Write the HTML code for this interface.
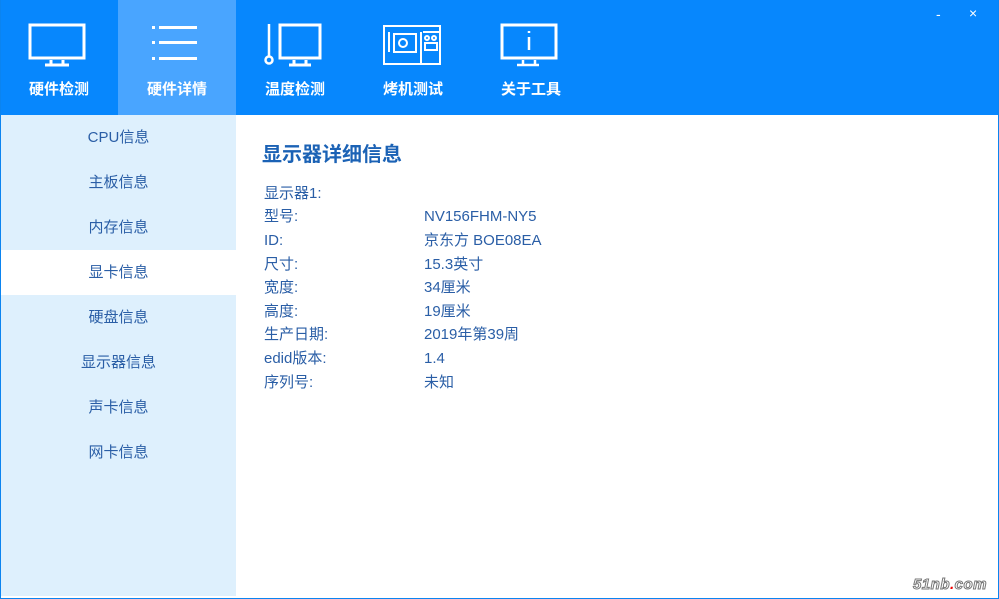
<!DOCTYPE html>
<html><head><meta charset="utf-8"><style>
*{margin:0;padding:0;box-sizing:border-box}
body{width:999px;height:599px;overflow:hidden;background:#fff;font-family:"Liberation Sans","Noto Sans CJK SC",sans-serif;position:relative}
.hdr{position:absolute;left:0;top:0;width:999px;height:115px;background:#0787fd}
.tab{position:absolute;top:0;width:118px;height:115px;color:#fff;font-size:15px;font-weight:bold;text-align:center}
.tab span{position:absolute;left:0;right:0;top:78px}
.tab svg{position:absolute;left:27px;top:22px}
.act{background:#49a5ff}
.side{position:absolute;left:1px;top:115px;width:235px;height:481px;background:#def0fd}
.item{position:absolute;left:0;width:235px;height:45px;line-height:45px;text-align:center;font-size:15px;color:#2a5ea6}
.sel{background:#fff}
.frame{position:absolute;left:0;top:0;width:999px;height:599px;border:1px solid #0b84f0;border-top:none;pointer-events:none}
.t{position:absolute;left:262px;top:138px;font-size:20px;font-weight:bold;color:#1b62b5}
.r{position:absolute;font-size:15px;color:#2a5ea6;line-height:20px;height:20px}
.wm{position:absolute;right:12px;bottom:6px;font-size:15px;font-weight:bold;font-style:italic;color:#fff;-webkit-text-stroke:1px #777;letter-spacing:0.5px}
</style></head><body>
<div class="hdr"></div>
<div class="tab" style="left:0"><svg width="64" height="46" viewBox="0 0 64 46" fill="none" stroke="#fff" stroke-width="3"><rect x="3" y="3" width="54" height="33"/><path d="M24 38v4M36 38v4M18 43h24" /></svg><span>硬件检测</span></div>
<div class="tab act" style="left:118px"><svg width="64" height="46" viewBox="0 0 64 46" fill="#fff"><rect x="7" y="4" width="3" height="3"/><rect x="14" y="4" width="38" height="3"/><rect x="7" y="19" width="3" height="3"/><rect x="14" y="19" width="38" height="3"/><rect x="7" y="35" width="3" height="3"/><rect x="14" y="35" width="38" height="3"/></svg><span>硬件详情</span></div>
<div class="tab" style="left:236px"><svg width="64" height="46" viewBox="0 0 64 46" fill="none" stroke="#fff" stroke-width="2.5"><path d="M6 2v33"/><circle cx="6" cy="38" r="3.5"/><rect x="17" y="3" width="40" height="33" stroke-width="3"/><path d="M31 38v4M43 38v4M26 43h22" stroke-width="3"/></svg><span>温度检测</span></div>
<div class="tab" style="left:354px"><svg width="64" height="46" viewBox="0 0 64 46" fill="none" stroke="#fff" stroke-width="2"><rect x="3" y="4" width="56" height="38"/><path d="M8 10v20M13 12h22v18H13zM40 10v32M42 10h16"/><circle cx="22" cy="21" r="4"/><circle cx="46" cy="16" r="2"/><circle cx="53" cy="16" r="2"/><rect x="44" y="21" width="12" height="7"/></svg><span>烤机测试</span></div>
<div class="tab" style="left:472px"><svg width="64" height="46" viewBox="0 0 64 46" fill="none" stroke="#fff" stroke-width="3"><rect x="3" y="3" width="54" height="33"/><path d="M24 38v4M36 38v4M18 43h22M30 9v2M30 15v13" stroke-width="2.5"/></svg><span>关于工具</span></div>
<div style="position:absolute;left:936px;top:6px;color:#fff;font-size:14px">-</div>
<div style="position:absolute;left:969px;top:5px;color:#fff;font-size:14px">×</div>
<div class="side">
<div class="item" style="top:0">CPU信息</div>
<div class="item" style="top:45px">主板信息</div>
<div class="item" style="top:90px">内存信息</div>
<div class="item sel" style="top:135px">显卡信息</div>
<div class="item" style="top:180px">硬盘信息</div>
<div class="item" style="top:225px">显示器信息</div>
<div class="item" style="top:270px">声卡信息</div>
<div class="item" style="top:315px">网卡信息</div>
</div>
<div class="t">显示器详细信息</div>
<div class="r" style="left:264px;top:184px">显示器1:</div>
<div class="r" style="left:264px;top:207px">型号:</div><div class="r" style="left:424px;top:207px">NV156FHM-NY5</div>
<div class="r" style="left:264px;top:231px">ID:</div><div class="r" style="left:424px;top:231px">京东方 BOE08EA</div>
<div class="r" style="left:264px;top:255px">尺寸:</div><div class="r" style="left:424px;top:255px">15.3英寸</div>
<div class="r" style="left:264px;top:278px">宽度:</div><div class="r" style="left:424px;top:278px">34厘米</div>
<div class="r" style="left:264px;top:302px">高度:</div><div class="r" style="left:424px;top:302px">19厘米</div>
<div class="r" style="left:264px;top:325px">生产日期:</div><div class="r" style="left:424px;top:325px">2019年第39周</div>
<div class="r" style="left:264px;top:349px">edid版本:</div><div class="r" style="left:424px;top:349px">1.4</div>
<div class="r" style="left:264px;top:373px">序列号:</div><div class="r" style="left:424px;top:373px">未知</div>
<div class="wm">51nb<span style="color:#e00;-webkit-text-stroke:0">.</span>com</div>
<div class="frame"></div>
</body></html>
